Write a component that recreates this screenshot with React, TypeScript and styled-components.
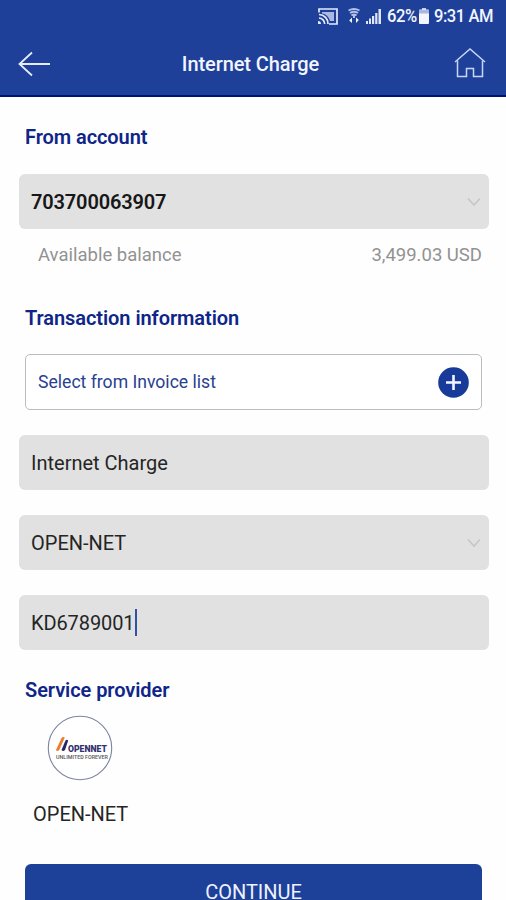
import React from 'react';
import styled, { createGlobalStyle } from 'styled-components';

const GlobalStyle = createGlobalStyle`
  * { box-sizing: border-box; }
  html, body { margin: 0; padding: 0; height: 900px; overflow: hidden; }
  body { background: #fefefe; font-family: Roboto, "Liberation Sans", sans-serif; }
`;

const Screen = styled.div`
  width: 506px;
  height: 900px;
  overflow: hidden;
  display: flex;
  flex-direction: column;
  background: #fefefe;
`;

const Header = styled.header`
  flex: none;
  height: 97px;
  background: #1e4098;
  border-bottom: 2px solid #03107a;
  color: #f2f5ff;
`;

const StatusBar = styled.div`
  height: 32px;
  padding: 0 12px 0 0;
  display: flex;
  justify-content: flex-end;
  align-items: center;
`;

const StatusText = styled.span<{ $width: number }>`
  width: ${(p) => p.$width}px;
  font-size: 18px;
  line-height: 32px;
  font-weight: 500;
  letter-spacing: -0.5px;
  white-space: nowrap;
  transform: scaleX(0.92);
  transform-origin: left center;
`;

const StatusIcon = styled.svg<{ $gap: number }>`
  flex: none;
  margin-right: ${(p) => p.$gap}px;
`;

const AppBar = styled.div`
  height: 64px;
  padding: 0 20px 0 18px;
  display: grid;
  grid-template-columns: 34px 1fr 32px;
  align-items: center;
`;

const Title = styled.h1`
  margin: 0;
  padding: 1px 5px 0 0;
  text-align: center;
  font-size: 20px;
  font-weight: 500;
  letter-spacing: -0.08px;
  line-height: 63px;
`;

const Content = styled.main`
  flex: 1;
  display: flex;
  flex-direction: column;
  padding: 0 17px 0 19px;
`;

const SectionTitle = styled.h2<{ $top: number; $bottom: number }>`
  margin: ${(p) => p.$top}px 0 ${(p) => p.$bottom}px 6px;
  font-size: 20px;
  line-height: 24px;
  font-weight: 600;
  letter-spacing: -0.07px;
  color: #0f2588;
`;

const Field = styled.div<{ $strong?: boolean }>`
  flex: none;
  height: 55px;
  padding: 0 7px 0 12px;
  display: flex;
  align-items: center;
  border-radius: 6px;
  background: #e1e1e1;
  color: ${(p) => (p.$strong ? '#171717' : '#252525')};
  font-size: 20px;
  font-weight: ${(p) => (p.$strong ? 600 : 400)};
  letter-spacing: ${(p) => (p.$strong ? -0.15 : 0)}px;
`;

const FieldText = styled.span`
  flex: 1;
`;

const Typed = styled.span`
  display: flex;
  align-items: center;
  letter-spacing: -0.1px;
`;

const Caret = styled.i`
  width: 2px;
  height: 27px;
  margin-left: 1px;
  background: #3450a4;
`;

const FieldStack = styled.div`
  display: grid;
  gap: 25px;
  margin-top: 25px;
`;

const BalanceRow = styled.div`
  display: flex;
  justify-content: space-between;
  padding: 0 7px 0 19px;
  margin-top: 14px;
  font-size: 18.5px;
  line-height: 24px;
  color: #929292;
`;

const InvoiceButton = styled.button`
  flex: none;
  height: 56px;
  margin: 0 7px 0 6px;
  padding: 0 12px 0 12px;
  display: flex;
  align-items: center;
  justify-content: space-between;
  border: 1px solid #bcbcbf;
  border-radius: 5px;
  background: #fff;
  color: #27418f;
  font: 400 17.6px Roboto, sans-serif;
`;

const ProviderLogo = styled.svg`
  flex: none;
  margin-left: 28px;
`;

const ProviderName = styled.div`
  margin: 21px 0 0 14px;
  font-size: 20px;
  line-height: 24px;
  color: #252525;
`;

const ContinueButton = styled.button`
  flex: none;
  height: 56px;
  margin: 38px 7px 0 6px;
  padding: 0;
  border: 0;
  border-radius: 6px;
  background: #1d4099;
  color: #eef2ff;
  font: 400 20px Roboto, sans-serif;
`;

const Chevron = () => (
  <svg width="16" height="12" viewBox="0 0 16 12" fill="none" stroke="#c6c6c6" strokeWidth="1.6">
    <path d="M2 2.5 L8 9 L14 2.5" />
  </svg>
);

const CastIcon = () => (
  <StatusIcon $gap={10} width="20" height="17" viewBox="0 0 20 17" fill="none" stroke="#e4eaff" strokeWidth="1.7">
    <path d="M1 4.5V1h18v15h-8" />
    <path d="M1 6.5a9 9 0 0 1 9 9.5M1 10a6 6 0 0 1 5.700 6" />
    <path d="M0 13a3 3 0 0 1 3 3H0z" fill="#e4eaff" stroke="none" />
    <path d="M4 4H16V13H12C11 9 8 6 4 5.500z" fill="#a9b9e0" stroke="none" />
  </StatusIcon>
);

const WifiIcon = () => (
  <StatusIcon $gap={6} width="12" height="16" viewBox="0 0 12 16" fill="none" stroke="#b4c2ea" strokeWidth="1.8">
    <path d="M.5 2.500Q6-.5 11.500 2.500M2 5Q6 2.500 10 5M3.500 7.500Q6 5.500 8.500 7.500" />
    <path d="M6 7v3" strokeWidth="2" />
    <path d="M4 9.500v5.500L1.200 12.500zM8 15V9.500l2.800 2.500z" fill="#f2f5ff" stroke="none" />
  </StatusIcon>
);

const SignalIcon = () => (
  <StatusIcon $gap={6} width="15" height="15" viewBox="0 0 15 15" fill="#dfe6fc">
    <path d="M0 12h2v3H0zM3 9.500h2V15H3zM6 7h2.200v8H6zM9.200 4h2.200v11H9.200zM12.500 0H15v15h-2.500z" />
  </StatusIcon>
);

const BatteryIcon = () => (
  <StatusIcon $gap={5} width="10" height="16" viewBox="0 0 10 16">
    <path d="M3 0h4v2H3z" fill="#c0cdf0" />
    <rect y="1.500" width="10" height="14.500" rx="1" fill="#f4f6ff" />
    <rect x="0" y="2" width="10" height="3.500" fill="#a9b8e0" />
  </StatusIcon>
);

const BackIcon = () => (
  <svg width="34" height="28" viewBox="0 0 34 28" fill="none" stroke="#e5ebff" strokeWidth="1.800">
    <path d="M32 14H1.500M14 2.500L1.500 14L14 25.500" />
  </svg>
);

const HomeIcon = () => (
  <svg width="32" height="32" viewBox="0 0 32 32" fill="none" stroke="#c9d5f8" strokeWidth="1.500">
    <path d="M1 14L16 1L31 14" />
    <path d="M3.500 12.500V28.500H12.500V20.500H19.500V28.500H28.500V12.500" />
  </svg>
);

const PlusIcon = () => (
  <svg width="31" height="31" viewBox="0 0 31 31">
    <circle cx="15.500" cy="15.500" r="15.300" fill="#183b99" />
    <path d="M15.500 8v15M8 15.500h15" stroke="#f3f6ff" strokeWidth="2.600" />
  </svg>
);

const OpenNetLogo = () => (
  <ProviderLogo width="66" height="66" viewBox="0 0 66 66">
    <circle cx="33" cy="33" r="31.700" fill="#fff" stroke="#7d83a0" strokeWidth="1.100" />
    <path d="M9 35L14.500 23Q15.800 21.200 17.800 22.500L12.300 35Q10 37 9 35z" fill="#ed7d30" />
    <path d="M14.500 35L18.500 25.500Q19.800 24 21.200 25.500L18 35Q16 37 14.500 35z" fill="#262569" />
    <text x="21" y="36.500" textLength="39" lengthAdjust="spacingAndGlyphs" fontFamily="Roboto" fontSize="8.500" fontWeight="900" fill="#343170">OPENNET</text>
    <text x="9" y="43.500" textLength="52" lengthAdjust="spacingAndGlyphs" fontFamily="Roboto" fontSize="5" fontWeight="500" fill="#555">UNLIMITED FOREVER</text>
  </ProviderLogo>
);

export default function App() {
  return (
    <Screen>
      <GlobalStyle />
      <Header>
        <StatusBar>
          <CastIcon />
          <WifiIcon />
          <SignalIcon />
          <StatusText $width={32}>62%</StatusText>
          <BatteryIcon />
          <StatusText $width={60}>9:31 AM</StatusText>
        </StatusBar>
        <AppBar>
          <BackIcon />
          <Title>Internet Charge</Title>
          <HomeIcon />
        </AppBar>
      </Header>
      <Content>
        <SectionTitle $top={28} $bottom={25}>From account</SectionTitle>
        <Field $strong>
          <FieldText>703700063907</FieldText>
          <Chevron />
        </Field>
        <BalanceRow>
          <span>Available balance</span>
          <span>3,499.03 USD</span>
        </BalanceRow>
        <SectionTitle $top={39} $bottom={24}>Transaction information</SectionTitle>
        <InvoiceButton>
          <span>Select from Invoice list</span>
          <PlusIcon />
        </InvoiceButton>
        <FieldStack>
          <Field>
            <FieldText>Internet Charge</FieldText>
          </Field>
          <Field>
            <FieldText>OPEN-NET</FieldText>
            <Chevron />
          </Field>
          <Field>
            <Typed>
              KD6789001
              <Caret />
            </Typed>
          </Field>
        </FieldStack>
        <SectionTitle $top={28} $bottom={13}>Service provider</SectionTitle>
        <OpenNetLogo />
        <ProviderName>OPEN-NET</ProviderName>
        <ContinueButton>CONTINUE</ContinueButton>
      </Content>
    </Screen>
  );
}
